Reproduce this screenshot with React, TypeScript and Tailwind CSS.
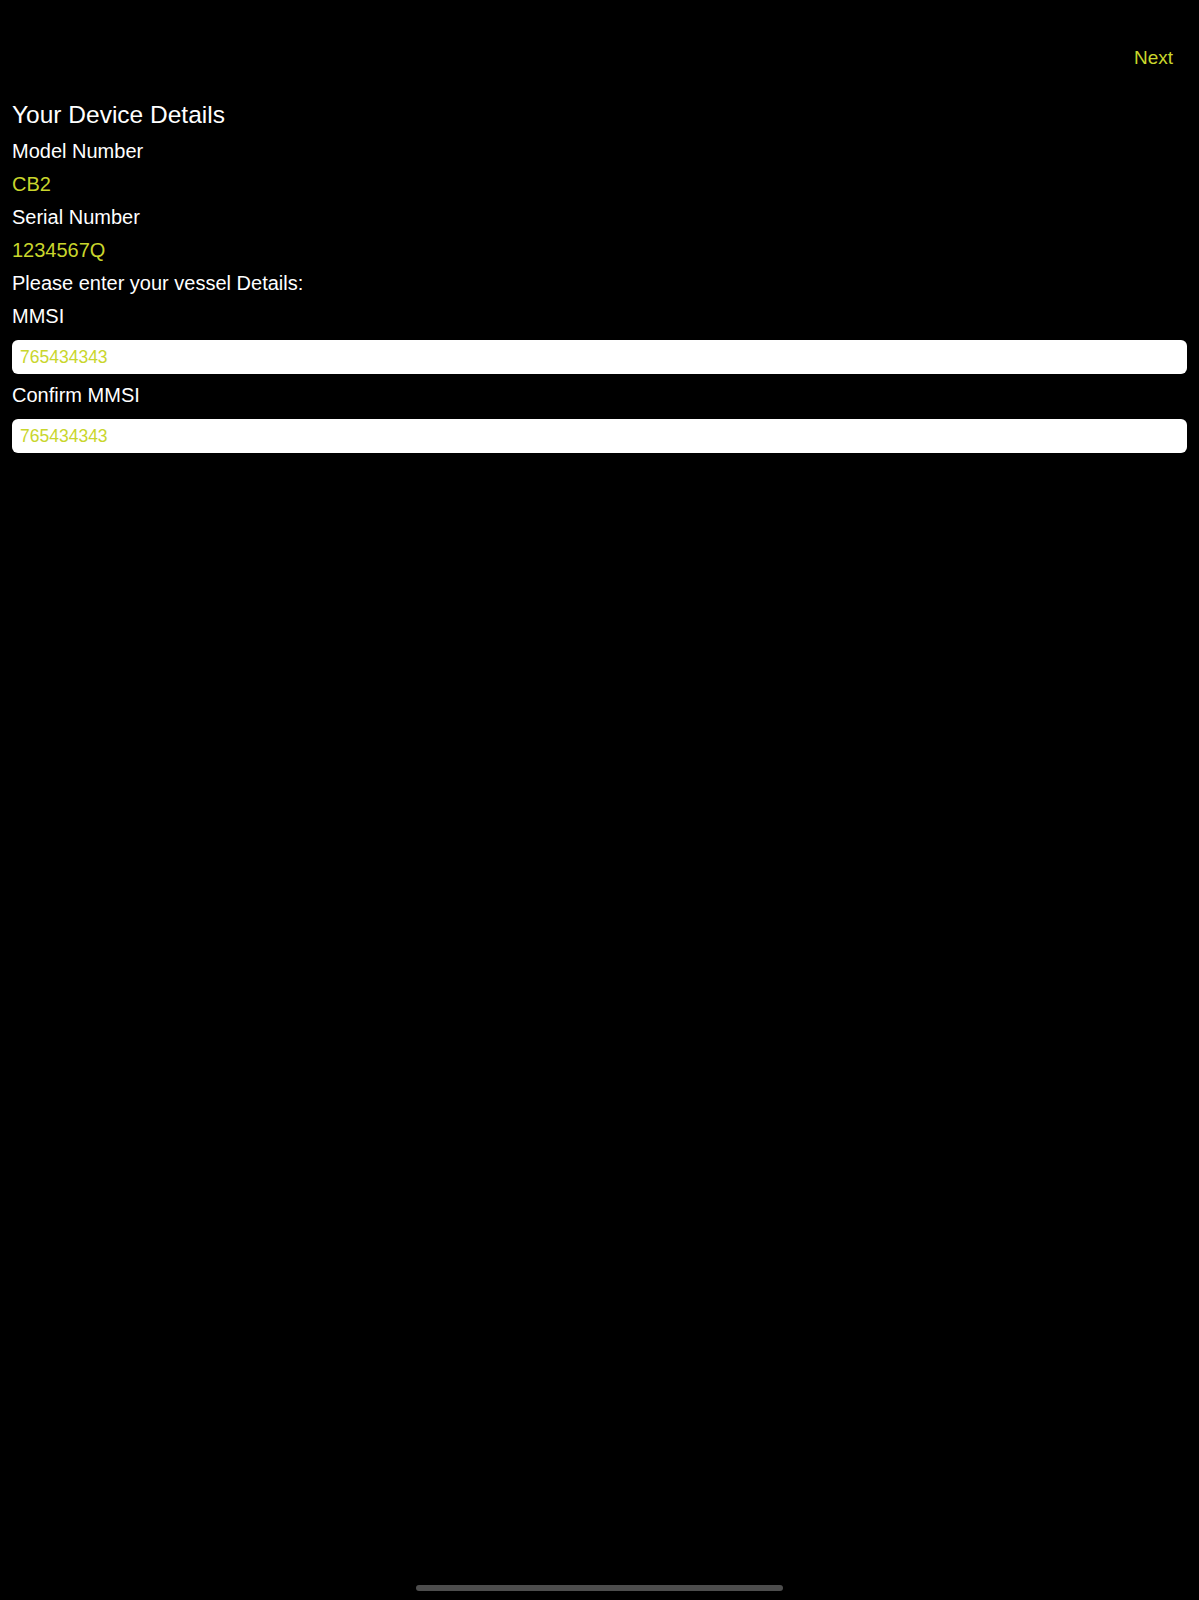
import React from "react";

const accent = "text-[#c9d62c]";

const Label = ({ children }: { children: React.ReactNode }) => (
  <p className="text-[20px] leading-[33px] text-white">{children}</p>
);

const Value = ({ children }: { children: React.ReactNode }) => (
  <p className={`text-[20px] leading-[33px] ${accent}`}>{children}</p>
);

const Field = ({ value }: { value: string }) => (
  <input
    readOnly
    defaultValue={value}
    className={`mt-[7px] block h-[34px] w-full rounded-[6px] bg-white px-[8px] text-[17.5px] outline-none ${accent}`}
  />
);

export default function App() {
  return (
    <div className="flex h-[1600px] w-full flex-col bg-black font-['Liberation_Sans',Arial,sans-serif]">
      {/* nav bar */}
      <header className="flex justify-end pt-[46px] pr-[26px]">
        <button className={`text-[19px] leading-[24px] ${accent}`}>Next</button>
      </header>

      <main className="mt-[27px] px-[12px]">
        <h1 className="text-[24.5px] leading-[36px] text-white">Your Device Details</h1>
        <div className="mt-[2px]">
          <Label>Model Number</Label>
          <Value>CB2</Value>
          <Label>Serial Number</Label>
          <Value>1234567Q</Value>
          <Label>Please enter your vessel Details:</Label>
          <Label>MMSI</Label>
          <Field value="765434343" />
          <div className="mt-[5px]">
            <Label>Confirm MMSI</Label>
          </div>
          <Field value="765434343" />
        </div>
      </main>

      <div className="flex-1" />
      {/* home indicator */}
      <div className="mx-auto mb-[9px] h-[6px] w-[367px] rounded-full bg-[#4d4d4d]" />
    </div>
  );
}
